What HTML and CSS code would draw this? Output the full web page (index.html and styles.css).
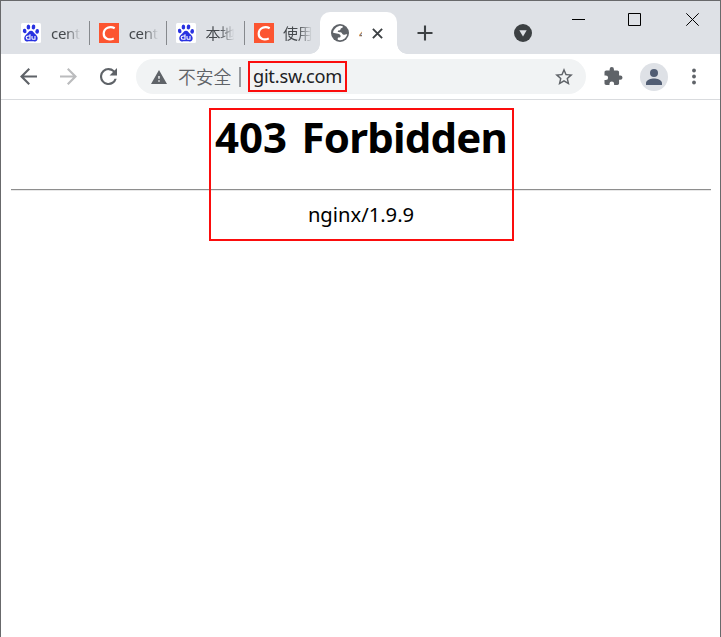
FILE: index.html
```
<!DOCTYPE html>
<html lang="zh-CN">
<head>
<meta charset="utf-8">
<title>403 Forbidden</title>
<link rel="stylesheet" href="styles.css">
</head>
<body>
<svg class="defs" aria-hidden="true">
  <symbol id="paw" viewBox="0 0 20 20">
    <rect width="20" height="20" rx="1.5" fill="#fff"/>
    <g fill="#2932e1">
      <ellipse cx="3.7" cy="8" rx="1.8" ry="2.3" transform="rotate(-12 3.7 8)"/>
      <ellipse cx="7.4" cy="4" rx="1.8" ry="2.5"/>
      <ellipse cx="12.5" cy="4" rx="1.8" ry="2.5" transform="rotate(8 12.5 4)"/>
      <ellipse cx="16.2" cy="8.4" rx="1.8" ry="2.3" transform="rotate(8 16.2 8.4)"/>
      <path d="M10 7.7c2.2 0 2.7 2 4.1 3.4 1.6 1.5 2.9 2.7 2.5 4.8-.5 2.5-2.6 2.7-4.6 2.4-1.4-.2-2.600-.2-4 0-2.100.4-4.300 0-4.700-2.400-.4-2.100 1-3.300 2.500-4.800C7.200 9.700 7.800 7.700 10 7.700z"/>
    </g>
    <g fill="none" stroke="#fff" stroke-width="1.1">
      <path d="M9 11.300V16.300H7.200c-2.600 0-2.600-3.300 0-3.300H9M11 13v2.300q0 1 1 1h2V13"/>
    </g>
  </symbol>
  <symbol id="clogo" viewBox="0 0 20 20">
    <rect width="20" height="20" fill="#fc5531"/>
    <path d="M15.700 5.200C11.200 2.600 4.900 4.700 4.700 10.500c-.1 5.300 5.200 7.200 10.100 5" fill="none" stroke="#fff" stroke-width="2.200"/>
  </symbol>
</svg>
<div class="window">
  <header class="tabstrip">
    <div class="tab"><svg class="favicon"><use href="#paw"/></svg><span class="label">cent</span></div>
    <div class="tab"><svg class="favicon"><use href="#clogo"/></svg><span class="label">cent</span></div>
    <div class="tab"><svg class="favicon"><use href="#paw"/></svg><span class="label cjk">本地</span></div>
    <div class="tab last"><svg class="favicon"><use href="#clogo"/></svg><span class="label cjk">使用</span></div>
    <div class="tab active">
      <svg class="globe" viewBox="2 2 20 20"><circle cx="12" cy="12" r="10" fill="#5f6368"/><path fill="#fff" d="M4.100 11.500c.7-3.200 3-6 6.900-7.300 1.400-.3 3.100-.1 4.300.5-.2 1.300-1 1.700-2 2-.7.3-.6 1-.9 1.700-.7 1.200-2.600.3-2.900 1.600 0 1.500 3.300.7 4.300 1.700.8.9 1 2.300 2.400 2.300 1.100 0 2.200-.7 3.800-.7-.8 3.500-3.800 6.500-7.800 6.700-1.100.1-2-.1-2.700-.4v-2.100c.7-.7 2.700-.3 3.200-1.600.3-1.700-1.200-2.800-2.800-3.100-2.100-.4-3.800-.3-5.800-1.300z"/></svg>
      <span class="sliver">4</span>
      <svg class="close" viewBox="0 0 11 11"><path d="M.9.9l9.200 9.200M10.100.9L.9 10.100" stroke="#3c4043" stroke-width="1.900"/></svg>
    </div>
    <svg class="plus" viewBox="0 0 16 16"><path d="M8 .5v15M.5 8h15" stroke="#3c4043" stroke-width="2.100"/></svg>
    <svg class="search" viewBox="0 0 18 18"><circle cx="9" cy="9" r="9" fill="#3c4043"/><path d="M5.300 6.300h7.400L9 12.500z" fill="#dee1e6"/></svg>
    <svg class="controls" viewBox="0 0 127 14"><g fill="none" stroke="#000"><path d="M0 6.500h13M56.500.5h12v12h-12z"/><path d="M114.300.3l12.400 12.400M126.700.3l-12.400 12.400"/></g></svg>
  </header>
  <nav class="toolbar">
    <svg class="nav" viewBox="4 4 16 16"><path fill="#5f6368" d="M20 11H7.830l5.590-5.590L12 4l-8 8 8 8 1.410-1.410L7.830 13H20z"/></svg>
    <svg class="nav forward" viewBox="4 4 16 16"><path fill="#bbbcbe" d="M12 4l-1.410 1.410L16.170 11H4v2h12.170l-5.580 5.590L12 20l8-8z"/></svg>
    <svg class="reload" viewBox="4 4 16 16"><path fill="#5f6368" d="M17.650 6.350A7.960 7.960 0 0 0 12 4a8 8 0 1 0 7.730 10h-2.080A6 6 0 1 1 12 6c1.660 0 3.140.69 4.220 1.780L13 11h7V4z"/></svg>
    <div class="omnibox">
      <svg class="warning" viewBox="1 2 22 19"><path fill="#5f6368" d="M1 21h22L12 2zm12-3h-2v-2h2zm0-4h-2v-4h2z"/></svg>
      <span class="insecure">不安全</span>
      <span class="divider"></span>
      <span class="url">git.sw.com</span>
      <svg class="star" viewBox="2 2 20 19"><path fill="#5f6368" d="M22 9.240l-7.190-.62L12 2 9.190 8.630 2 9.240l5.460 4.730L5.820 21 12 17.270 18.180 21l-1.630-7.030zM12 15.400l-3.760 2.270 1-4.280-3.320-2.880 4.380-.38L12 6.100l1.710 4.040 4.380.38-3.320 2.880 1 4.280z"/></svg>
    </div>
    <svg class="puzzle" viewBox="2 1 21 21"><path fill="#5f6368" d="M20.500 11H19V7c0-1.100-.9-2-2-2h-4V3.500a2.500 2.500 0 0 0-5 0V5H4c-1.100 0-2 .9-2 2v3.800h1.500a2.700 2.700 0 0 1 0 5.400H2V20c0 1.100.9 2 2 2h3.800v-1.500a2.700 2.700 0 0 1 5.400 0V22H17c1.100 0 2-.9 2-2v-4h1.500a2.500 2.500 0 0 0 0-5z"/></svg>
    <span class="avatar"><svg viewBox="4 4 16 16"><path fill="#515d73" d="M12 12a4 4 0 1 0 0-8 4 4 0 0 0 0 8zm0 1.500c-2.700 0-8 1.400-8 4.500v2h16v-2c0-3.100-5.300-4.500-8-4.500z"/></svg></span>
    <svg class="dots" viewBox="0 0 4 16"><g fill="#5f6368"><circle cx="2" cy="2" r="1.900"/><circle cx="2" cy="8" r="1.900"/><circle cx="2" cy="14" r="1.900"/></g></svg>
  </nav>
  <main class="page">
    <h1>403 <span class="word">Forbidden</span></h1>
    <hr>
    <p>nginx/1.9.9</p>
    <div class="mark"></div>
  </main>
</div>
</body>
</html>
```
FILE: styles.css
```
* { box-sizing: border-box; }
body { margin: 0; font-family: "Noto Sans", "Noto Sans CJK SC", sans-serif; }
svg { display: block; flex: none; }
.defs { position: absolute; width: 0; height: 0; }
.window {
  height: 637px;
  border: 1px solid #68696b;
  border-bottom: 0;
  background: #fff;
  overflow: hidden;
}
.tabstrip {
  display: flex;
  align-items: center;
  height: 53px;
  padding: 11px 0 0 11px;
  background: #dee1e6;
}
.tab {
  display: flex;
  align-items: center;
  flex: none;
  width: 77.700px;
  height: 24px;
  margin-bottom: 1px;
  padding-left: 9px;
  border-right: 1.5px solid #86898d;
}
.tab.last { width: 74px; border-right: 0; }
.favicon { width: 20px; height: 20px; }
.label {
  width: 30px;
  margin-left: 10px;
  overflow: hidden;
  white-space: nowrap;
  font-size: 15px;
  line-height: 24px;
  letter-spacing: -.3px;
  color: #45494d;
  -webkit-mask-image: linear-gradient(to right, #000 50%, transparent 98%);
  mask-image: linear-gradient(to right, #000 50%, transparent 98%);
}
.label.cjk {
  margin-left: 9px;
  font-family: "Noto Sans CJK SC", sans-serif;
  font-weight: 400;
  letter-spacing: -.3px;
}
.tab.active {
  position: relative;
  width: 77px;
  height: 42px;
  margin: 0 0 0 1px;
  padding: 0 0 0 11px;
  border: 0;
  border-radius: 10px 10px 0 0;
  background: #fff;
}
.tab.active::before, .tab.active::after {
  content: "";
  position: absolute;
  bottom: 0;
  width: 10px;
  height: 10px;
}
.tab.active::before { left: -10px; background: radial-gradient(circle at 0 0, transparent 9.5px, #fff 10px); }
.tab.active::after { right: -10px; background: radial-gradient(circle at 100% 0, transparent 9.5px, #fff 10px); }
.globe { width: 18px; height: 18px; }
.sliver {
  width: 3px;
  height: 17px;
  margin-left: 10px;
  overflow: hidden;
  font-size: 15px;
  line-height: 17px;
  color: #86705d;
}
.close { width: 11px; height: 11px; margin-left: 10px; }
.plus { width: 16px; height: 16px; margin: 0 0 1px 19.500px; }
.search { width: 18px; height: 18px; margin-left: 81px; }
.controls { width: 127px; height: 14px; margin: 0 0 26px 40.400px; }
.toolbar {
  display: flex;
  align-items: center;
  height: 46px;
  padding-left: 19px;
  border-bottom: 1px solid #d9dbde;
}
.nav { width: 17px; height: 17px; margin-bottom: 1px; }
.forward { margin-left: 23px; }
.reload { width: 17px; height: 17px; margin: 0 0 1px 23px; }
.omnibox {
  display: flex;
  align-items: center;
  width: 450px;
  height: 35px;
  flex: none;
  margin-left: 19px;
  padding-left: 15px;
  border-radius: 18px;
  background: #f1f3f4;
}
.warning { width: 16px; height: 14px; }
.insecure {
  width: 54px;
  margin: 0 0 2px 11px;
  font: 350 17.800px/24px "Noto Sans CJK SC", sans-serif;
  white-space: nowrap;
  color: #5f6368;
}
.divider { width: 2px; height: 20px; margin-left: 7px; background: #9a9da1; }
.url {
  display: flex;
  align-items: center;
  justify-content: center;
  width: 99px;
  height: 31px;
  margin: 0 0 0 7px;
  padding-bottom: 2px;
  border: 2px solid #fb0d0d;
  font-size: 18.200px;
  letter-spacing: -.2px;
  color: #202124;
}
.star { width: 18px; height: 17px; margin: 0 0 1px 208px; }
.puzzle { width: 19px; height: 18px; margin: 0 0 1px 18px; }
.avatar {
  display: flex;
  align-items: center;
  justify-content: center;
  width: 28px;
  height: 28px;
  margin-left: 17px;
  border-radius: 50%;
  background: #dee1e6;
}
.avatar svg { width: 16px; height: 16px; }
.dots { width: 4px; height: 17px; margin: 0 0 1px 23.500px; }
.page { position: relative; padding: 8px 9px 0 10px; text-align: center; }
h1 { margin: 0; font-size: 42px; line-height: 58px; word-spacing: 3.500px; }
.word { letter-spacing: -.8px; }
hr { height: 2px; margin: 23px 0 0; border: 0; border-top: 1px solid #8e8e8e; border-bottom: 1px solid #e8e8e8; }
.page p { margin: 8px 0 0; font-size: 20.200px; line-height: 30px; }
.mark {
  position: absolute;
  left: 208px;
  top: 8px;
  width: 305px;
  height: 133px;
  border: 2px solid #fb0d0d;
}
```
